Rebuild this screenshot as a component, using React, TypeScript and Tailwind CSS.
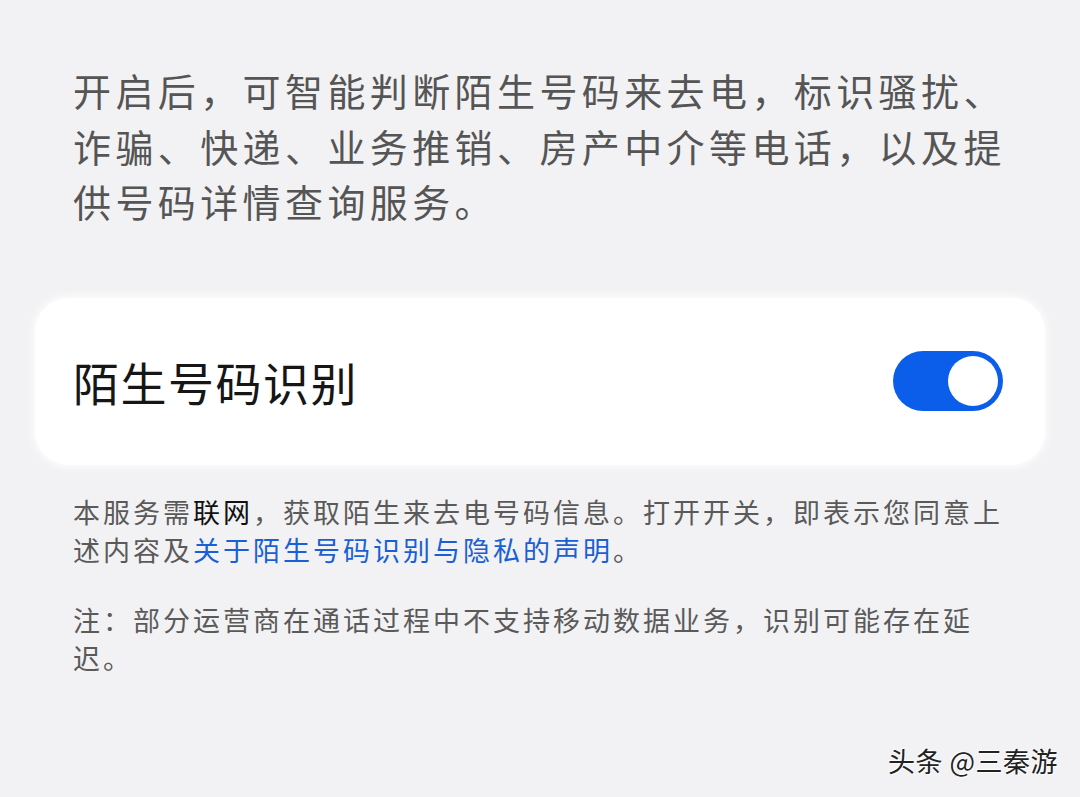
export default function App() {
  return (
    <div
      className="relative h-[797px] w-full overflow-hidden bg-[#f2f2f4]"
      style={{ fontFamily: '"Noto Sans CJK SC", "Noto Sans", sans-serif' }}
    >
      {/* Intro */}
      <p className="px-[73px] pt-[62px] text-[38px] leading-[55.5px] tracking-[4.4px] text-[#555555]">
        开启后，可智能判断陌生号码来去电，标识骚扰、诈骗、快递、业务推销、房产中介等电话，以及提供号码详情查询服务。
      </p>

      {/* Switch card */}
      <div className="mx-[35px] mt-[69px] flex h-[167px] items-center justify-between rounded-[34px] bg-white pl-[38px] pr-[42px] shadow-[0_0_8px_2px_rgba(255,255,255,0.9)]">
        <span className="text-[46px] tracking-[1.5px] text-[#161616]">陌生号码识别</span>
        <div className="flex h-[60px] w-[110px] items-center justify-end rounded-full bg-[#0b5eea] pr-[5px]">
          <div className="h-[50px] w-[50px] rounded-full bg-white" />
        </div>
      </div>

      {/* Notes */}
      <div className="px-[73px] pt-[28px] text-[27px] leading-[38px] tracking-[3px] text-[#5a5a5a]">
        <p>
          本服务需<span className="text-[#111111]">联网</span>，获取陌生来去电号码信息。打开开关，即表示您同意上述内容及
          <span className="text-[#1a5fd3]">关于陌生号码识别与隐私的声明</span>。
        </p>
        <p className="mt-[32px]">注：部分运营商在通话过程中不支持移动数据业务，识别可能存在延迟。</p>
      </div>

      {/* Watermark */}
      <div className="absolute right-[22px] top-[744px] text-[27px] leading-[34px] tracking-[0.5px] text-[#222222] [text-shadow:1px_1px_1px_rgba(255,255,255,0.9),-1px_-1px_1px_rgba(255,255,255,0.9)]">
        头条 @三秦游
      </div>
    </div>
  )
}
